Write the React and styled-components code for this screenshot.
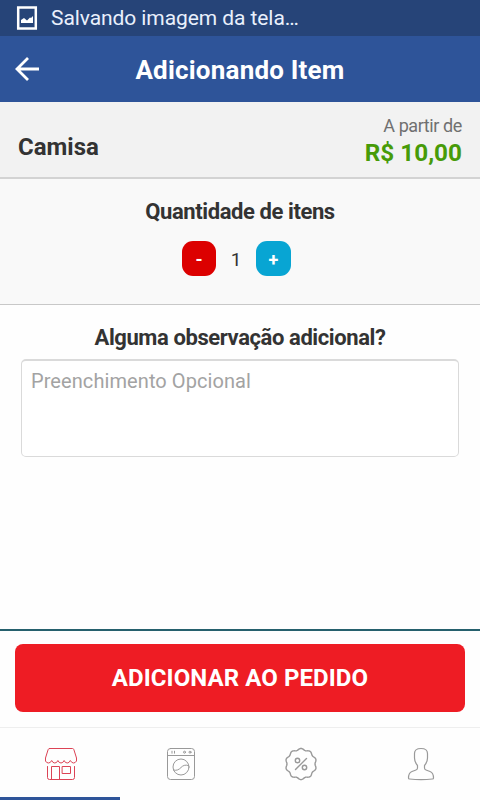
// src/App.jsx
import React, { useState } from "react";
import styled, { createGlobalStyle } from "styled-components";

const GlobalStyle = createGlobalStyle`
  * {
    box-sizing: border-box;
  }

  body {
    margin: 0;
    font-family: Roboto, "Liberation Sans", sans-serif;
    color: #333;
  }
`;

const Screen = styled.div`
  width: 480px;
  height: 800px;
  display: flex;
  flex-direction: column;
  overflow: hidden;
  background-color: #fefefe;
`;

const StatusBar = styled.div`
  flex: none;
  height: 36px;
  padding-left: 16px;
  display: flex;
  align-items: center;
  gap: 13px;
  background-color: #264478;
  color: #e9f0fc;
  font-size: 21px;
  letter-spacing: -0.08px;
  line-height: 36px;
`;

const Header = styled.header`
  flex: none;
  height: 66px;
  padding: 0 14px;
  display: grid;
  grid-template-columns: 28px 1fr 28px;
  align-items: center;
  background-color: #2e5499;
`;

const BackButton = styled.button`
  display: flex;
  padding: 0;
  border: none;
  background: none;
  cursor: pointer;
`;

const Title = styled.h1`
  margin: 2px 0 0;
  text-align: center;
  color: #fff;
  font-size: 26px;
  font-weight: bold;
  letter-spacing: 0.2px;
  line-height: 32px;
`;

const ItemBar = styled.section`
  flex: none;
  height: 77px;
  padding: 0 18px 0;
  display: flex;
  justify-content: space-between;
  background-color: #f2f2f2;
  border-bottom: 2px solid #d3d3d3;
`;

const ItemName = styled.h2`
  margin: 30px 0 0;
  font-size: 24px;
  line-height: 30px;
`;

const PriceBox = styled.div`
  padding-top: 12px;
  text-align: right;
`;

const PriceLabel = styled.div`
  color: #707070;
  font-size: 18px;
  letter-spacing: -0.4px;
  line-height: 24px;
`;

const Price = styled.div`
  color: #479b08;
  font-size: 24.3px;
  font-weight: bold;
  line-height: 30px;
`;

const QuantitySection = styled.section`
  flex: none;
  height: 126px;
  padding-top: 20px;
  display: flex;
  flex-direction: column;
  align-items: center;
  background-color: #f9f9f9;
  border-bottom: 1px solid #c8c8c8;
`;

const SectionTitle = styled.h3`
  margin: 0;
  text-align: center;
  font-size: 22px;
  letter-spacing: -0.41px;
  line-height: 26px;
`;

const Stepper = styled.div`
  margin: 16px 7px 0 0;
  display: flex;
  align-items: center;
`;

const StepButton = styled.button`
  width: ${({ $width }) => $width}px;
  height: 35px;
  padding: 3px 0 0;
  border: none;
  border-radius: 11px;
  background-color: ${({ $color }) => $color};
  color: #fff;
  font-family: inherit;
  font-size: 18px;
  font-weight: bold;
  line-height: 32px;
  cursor: pointer;
`;

const Quantity = styled.span`
  width: 40px;
  padding-top: 2px;
  text-align: center;
  font-size: 19px;
`;

const NotesSection = styled.section`
  flex: 1;
  padding: 20px 21px 0;
`;

const Notes = styled.textarea`
  display: block;
  width: 438px;
  height: 98px;
  margin-top: 8px;
  padding: 8px 9px;
  border: 1px solid #dadada;
  border-top-width: 2px;
  border-radius: 5px;
  outline: none;
  resize: none;
  background-color: #fff;
  font-family: inherit;
  font-size: 20px;
  letter-spacing: 0.08px;
  line-height: 24px;

  &::placeholder {
    color: #a3a3a3;
  }
`;

const Footer = styled.div`
  flex: none;
  height: 98px;
  padding: 13px 15px 0;
  border-top: 2px solid #26606d;
`;

const AddButton = styled.button`
  width: 100%;
  height: 68px;
  padding: 0;
  border: none;
  border-radius: 8px;
  background-color: #ee1c24;
  color: #fff;
  font-family: inherit;
  font-size: 24px;
  font-weight: bold;
  letter-spacing: 0.08px;
  cursor: pointer;
`;

const TabBar = styled.nav`
  flex: none;
  height: 73px;
  display: grid;
  grid-template-columns: repeat(4, 1fr);
  border-top: 1px solid #eee;
`;

const Tab = styled.button`
  padding: 0 0 0 2px;
  display: flex;
  align-items: center;
  justify-content: center;
  border: none;
  border-bottom: 3px solid ${({ $active }) => ($active ? "#2e5499" : "transparent")};
  background: none;
  color: ${({ $active }) => ($active ? "#dc4355" : "#999")};
  cursor: pointer;
`;

const TabIcon = styled.svg`
  width: 36px;
  height: 36px;
  margin-top: 3px;
  fill: none;
  stroke: currentColor;
  stroke-width: 1;
  stroke-linejoin: round;
  stroke-linecap: round;
`;

// scalloped outline with ten lobes for the discount badge
const badgePath = () => {
  const points = [];
  for (let i = 0; i < 120; i++) {
    const angle = (i / 120) * Math.PI * 2 - Math.PI / 2;
    const radius = 14.8 + 0.8 * Math.cos((i / 120) * Math.PI * 20);
    const x = 18 + radius * Math.cos(angle);
    const y = 18 + radius * Math.sin(angle);
    points.push(`${x.toFixed(2)} ${y.toFixed(2)}`);
  }
  return `M${points.join("L")}Z`;
};

const tabs = [
  {
    id: "Loja",
    icon: (
      <>
        <path d="M6.5 2.5h23q1 0 1.4 1.2L33.5 12v3q-1.2 2-3 2t-3.2-2.5q-1 2.5-3.1 2.5t-3.1-2.5q-1 2.5-3.1 2.5t-3.1-2.5q-1 2.5-3.1 2.5t-3.1-2.5q-1.2 2.5-3.2 2.5t-3-2v-3L5.1 3.7q.4-1.2 1.4-1.2Z" />
        <path d="M4.5 20.5v11q0 2 2 2h23q2 0 2-2v-11M8.5 33.5v-13h8v13M19.5 20.5h8v7h-8Z" />
      </>
    ),
  },
  {
    id: "Lavanderia",
    icon: (
      <>
        <rect x="4.5" y="2.5" width="27" height="31" rx="3" />
        <path d="M4.5 9.5h27M9 5.2v2M11.5 5.2v2" />
        <circle cx="21.5" cy="6.2" r="1" />
        <circle cx="27" cy="6.2" r="1" />
        <circle cx="18" cy="21" r="8" />
        <path d="M10.5 24c3.5 1 5.5-.5 7.5-2.5s4-3 7.5-2" />
      </>
    ),
  },
  {
    id: "Ofertas",
    icon: (
      <g strokeWidth="1.4">
        <path d={badgePath()} />
        <path d="M23.5 12.5l-11 11" />
        <circle cx="14.5" cy="14.5" r="2.2" />
        <circle cx="21.5" cy="21.5" r="2.2" />
      </g>
    ),
  },
  {
    id: "Perfil",
    icon: (
      <path
        strokeWidth="1.2"
        d="M18 2.5c5 0 6.500 1.800 6.500 5v4.500q0 4-3 7.500v2.500q0 1.500 1.500 2l4 1.500c2.500 1 3.500 3.500 3.500 6.500q0 1-1 1-11.500 1.200-23 0-1 0-1-1c0-3 1-5.500 3.500-6.500l4-1.500q1.500-.500 1.500-2v-2.500q-3-3.500-3-7.500V7.500c0-3.200 1.500-5 6.500-5Z"
      />
    ),
  },
];

const App = () => {
  const [quantity, setQuantity] = useState(1);
  const [notes, setNotes] = useState("");
  const [activeTab, setActiveTab] = useState("Loja");

  return (
    <>
      <GlobalStyle />
      <Screen>
        <StatusBar>
          <svg width="22" height="24" viewBox="0 0 22 24">
            <rect x="2.2" y="1.5" width="17.6" height="21" fill="none" stroke="#fff" strokeWidth="2.5" />
            <path d="M5 17v-3l3-2 3 2.5 3-3 1 .5 2-2V17Z" fill="#fff" />
          </svg>
          <span>Salvando imagem da tela…</span>
        </StatusBar>

        <Header>
          <BackButton>
            <svg width="28" height="28" viewBox="0 0 28 28" fill="none" stroke="#fff" strokeWidth="2.8">
              <path d="M25 14H3M14 3L3 14l11 11" />
            </svg>
          </BackButton>
          <Title>Adicionando Item</Title>
        </Header>

        <ItemBar>
          <ItemName>Camisa</ItemName>
          <PriceBox>
            <PriceLabel>A partir de</PriceLabel>
            <Price>R$ 10,00</Price>
          </PriceBox>
        </ItemBar>

        <QuantitySection>
          <SectionTitle>Quantidade de itens</SectionTitle>
          <Stepper>
            <StepButton
              $width={34}
              $color="#dc0000"
              onClick={() => setQuantity((prev) => Math.max(1, prev - 1))}
            >
              -
            </StepButton>
            <Quantity>{quantity}</Quantity>
            <StepButton
              $width={35}
              $color="#08a5d3"
              onClick={() => setQuantity((prev) => prev + 1)}
            >
              +
            </StepButton>
          </Stepper>
        </QuantitySection>

        <NotesSection>
          <SectionTitle>Alguma observação adicional?</SectionTitle>
          <Notes
            placeholder="Preenchimento Opcional"
            value={notes}
            onChange={(e) => setNotes(e.target.value)}
          />
        </NotesSection>

        <Footer>
          <AddButton>ADICIONAR AO PEDIDO</AddButton>
        </Footer>

        <TabBar>
          {tabs.map(({ id, icon }) => (
            <Tab key={id} $active={id === activeTab} onClick={() => setActiveTab(id)}>
              <TabIcon viewBox="0 0 36 36">{icon}</TabIcon>
            </Tab>
          ))}
        </TabBar>
      </Screen>
    </>
  );
};

export default App;
